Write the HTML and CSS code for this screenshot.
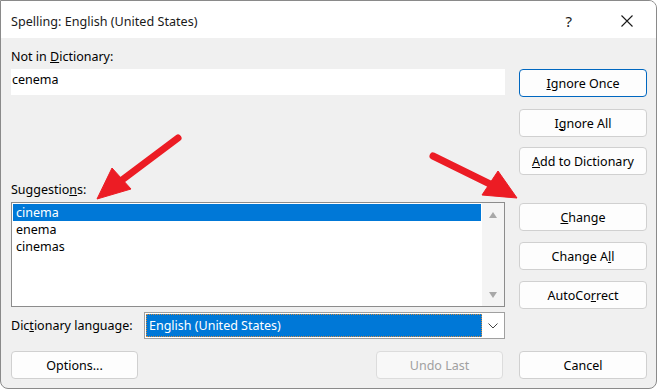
FILE: index.html
```html
<!DOCTYPE html>
<html>
<head>
    <title>Spelling: English (United States)</title>
    <link rel="stylesheet" href="styles.css">
</head>
<body>
    <div class="dialog">
        <div class="titlebar">
            <span class="title">Spelling: English (United States)</span>
            <span class="help">?</span>
            <span class="close">
                <svg width="12" height="12" viewBox="0 0 12 12"><path d="M0.5 0.5L11.5 11.5M11.5 0.5L0.5 11.5" stroke="#1a1a1a" stroke-width="1.1" fill="none"/></svg>
            </span>
        </div>

        <div class="content">
            <div class="left">
                <div class="lbl first">Not in <u>D</u>ictionary:</div>
                <div class="textbox">cenema</div>

                <div class="lbl sugg">Suggestio<u>n</u>s:</div>
                <div class="listbox">
                    <div class="items">
                        <div class="item selected">cinema</div>
                        <div class="item">enema</div>
                        <div class="item">cinemas</div>
                    </div>
                    <div class="scrollbar">
                        <span class="tri up"></span>
                        <span class="tri down"></span>
                    </div>
                </div>

                <div class="lang-row">
                    <div class="lbl">Dic<u>t</u>ionary language:</div>
                    <div class="combo">
                        <div class="combo-value"><span>English (United States)</span></div>
                        <div class="combo-arrow">
                            <svg width="10" height="6" viewBox="0 0 10 6"><path d="M0.5 0.5L5 5L9.5 0.5" stroke="#444" stroke-width="1" fill="none"/></svg>
                        </div>
                    </div>
                </div>

                <div class="bottom-row">
                    <button class="btn">Options...</button>
                    <button class="btn" disabled>Undo Last</button>
                </div>
            </div>

            <div class="right">
                <button class="btn primary b-once"><u>I</u>gnore Once</button>
                <button class="btn b-all">I<u>g</u>nore All</button>
                <button class="btn b-add"><u>A</u>dd to Dictionary</button>
                <button class="btn b-change"><u>C</u>hange</button>
                <button class="btn b-chall">Change A<u>l</u>l</button>
                <button class="btn b-auto">AutoCo<u>r</u>rect</button>
                <button class="btn b-cancel">Cancel</button>
            </div>
        </div>

        <!-- red annotation arrows -->
        <svg class="arrows" width="657" height="389" viewBox="0 0 657 389">
            <g fill="#ec1c24" stroke="#ec1c24">
                <line x1="178" y1="138" x2="118" y2="183" stroke-width="7" stroke-linecap="round"/>
                <polygon points="97,199 112,168 131,189" stroke-width="1" stroke-linejoin="round"/>
                <line x1="433" y1="156" x2="492" y2="185" stroke-width="7" stroke-linecap="round"/>
                <polygon points="517,198 482,195 498,171" stroke-width="1" stroke-linejoin="round"/>
            </g>
        </svg>
    </div>
</body>
</html>
```

FILE: styles.css
```css
body {
    margin: 0;
    background: #fff;
    font-family: "Noto Sans", sans-serif;
    font-size: 12.5px;
    color: #000;
}
.dialog {
    position: relative;
    box-sizing: border-box;
    width: 657px;
    height: 389px;
    background: #f0f0f0;
    border: 1px solid #8a8a8a;
    border-radius: 0 8px 8px 8px;
    overflow: hidden;
}
.titlebar {
    box-sizing: border-box;
    height: 37px;
    background: #fff;
    display: flex;
    align-items: center;
    padding: 3px 0 0 10px;
}
.title {
    font-size: 12.6px;
    color: #1a1a1a;
    flex: 1;
}
.help {
    font-size: 15px;
    color: #1a1a1a;
    margin-right: 49px;
}
.close {
    display: flex;
    margin-right: 23px;
}
.content {
    display: flex;
    gap: 14px;
    padding: 0 9px 0 10px;
}
.left {
    width: 494px;
    display: flex;
    flex-direction: column;
}
.right {
    width: 128px;
    display: flex;
    flex-direction: column;
}
.lbl {
    line-height: 16px;
    height: 16px;
}
.lbl.first {
    margin-top: 11px;
}
.lbl.sugg {
    margin-top: 87px;
}
.textbox {
    margin-top: 4px;
    height: 26px;
    background: #fff;
    line-height: 22px;
    padding-left: 1px;
    box-sizing: border-box;
}
.listbox {
    margin-top: 4px;
    height: 105px;
    box-sizing: border-box;
    border: 1px solid #8c8c8c;
    background: #fff;
    display: flex;
}
.items {
    flex: 1;
    padding: 1px;
}
.item {
    height: 17px;
    line-height: 17px;
    padding-left: 3px;
}
.item.selected {
    background: #0078d7;
    color: #fff;
}
.scrollbar {
    width: 22px;
    background: #f4f4f4;
    display: flex;
    flex-direction: column;
    justify-content: space-between;
    align-items: center;
    padding: 9px 0 8px;
    box-sizing: border-box;
}
.tri {
    width: 0;
    height: 0;
    border-left: 4.5px solid transparent;
    border-right: 4.5px solid transparent;
}
.tri.up {
    border-bottom: 6px solid #a8a8a8;
}
.tri.down {
    border-top: 6px solid #a8a8a8;
}
.lang-row {
    margin-top: 5px;
    height: 27px;
    display: flex;
    align-items: center;
    justify-content: space-between;
}
.combo {
    width: 361px;
    height: 27px;
    box-sizing: border-box;
    border: 1px solid #a0a0a0;
    background: #fff;
    display: flex;
    padding: 1px 0 1px 1px;
}
.combo-value {
    flex: 1;
    background: #0078d7;
    color: #fff;
    border: 1px dotted #d08a40;
    line-height: 21px;
    padding-left: 2px;
}
.combo-arrow {
    width: 22px;
    display: flex;
    align-items: center;
    justify-content: center;
}
.bottom-row {
    margin-top: 12px;
    display: flex;
    justify-content: space-between;
    padding-right: 2px;
}
.btn {
    box-sizing: border-box;
    height: 28px;
    width: 127px;
    background: #fdfdfd;
    border: 1px solid #d0d0d0;
    border-radius: 4px;
    font-family: "Noto Sans", sans-serif;
    font-size: 12.5px;
    color: #000;
    padding: 0;
}
.btn:disabled {
    color: #a0a0a0;
    border-color: #dcdcdc;
    background: #f8f8f8;
}
.right .btn {
    width: 128px;
}
.btn.primary {
    border-color: #0067c0;
}
.b-once { margin-top: 31px; }
.b-all { margin-top: 12px; }
.b-add { margin-top: 10px; }
.b-change { margin-top: 28px; }
.b-chall { margin-top: 11px; }
.b-auto { margin-top: 11px; }
.b-cancel { margin-top: 42px; }
.arrows {
    position: absolute;
    left: -1px;
    top: -1px;
}
```
